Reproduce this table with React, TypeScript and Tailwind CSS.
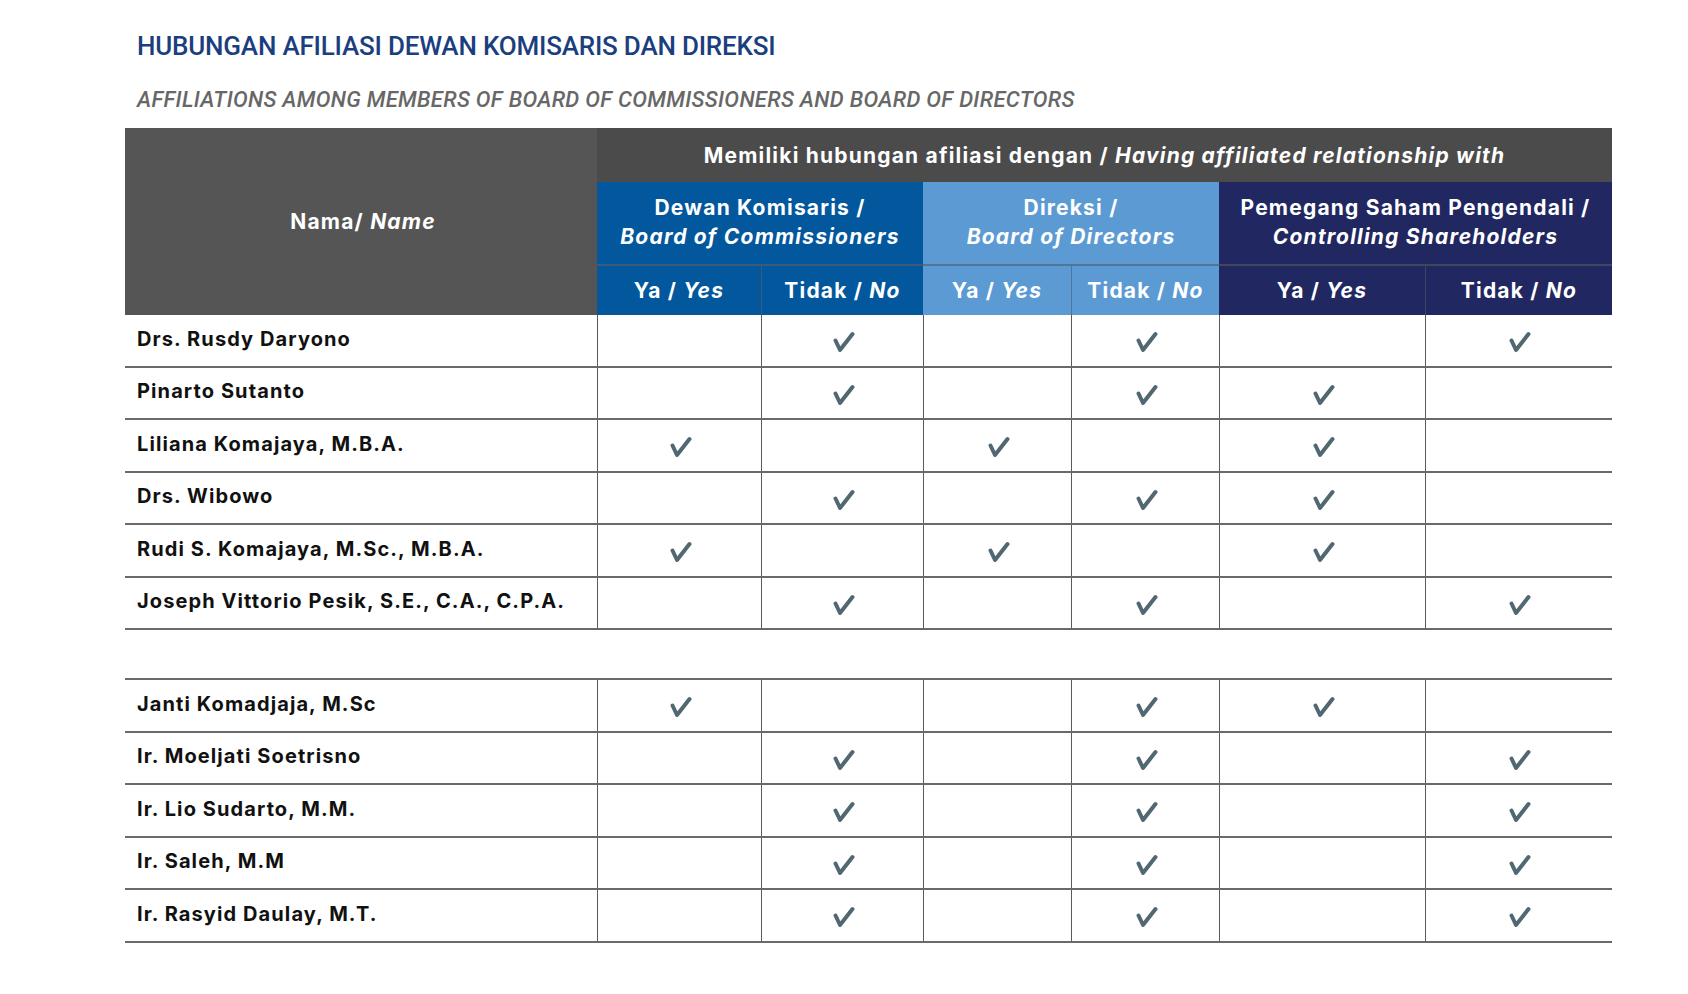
import React from "react";

const cols = "grid-cols-[472px_164px_162px_148px_148px_206px_187px]";

type Row = { name: string; v: [boolean, boolean, boolean] };

const group1: Row[] = [
  { name: "Drs. Rusdy Daryono", v: [false, false, false] },
  { name: "Pinarto Sutanto", v: [false, false, true] },
  { name: "Liliana Komajaya, M.B.A.", v: [true, true, true] },
  { name: "Drs. Wibowo", v: [false, false, true] },
  { name: "Rudi S. Komajaya, M.Sc., M.B.A.", v: [true, true, true] },
  { name: "Joseph Vittorio Pesik, S.E., C.A., C.P.A.", v: [false, false, false] },
];

const group2: Row[] = [
  { name: "Janti Komadjaja, M.Sc", v: [true, false, true] },
  { name: "Ir. Moeljati Soetrisno", v: [false, false, false] },
  { name: "Ir. Lio Sudarto, M.M.", v: [false, false, false] },
  { name: "Ir. Saleh, M.M", v: [false, false, false] },
  { name: "Ir. Rasyid Daulay, M.T.", v: [false, false, false] },
];

function Check() {
  return (
    <svg width="24" height="24" viewBox="0 0 24 24" className="mt-[4px]">
      <path
        d="M4.5 10.5 L9 20 L21.5 4"
        fill="none"
        stroke="#516873"
        strokeWidth="4"
        strokeLinecap="round"
        strokeLinejoin="round"
      />
    </svg>
  );
}

function Cell({ on }: { on: boolean }) {
  return (
    <div className="border-l-[1.5px] border-[#5a5a5a] flex items-center justify-center">
      {on ? <Check /> : null}
    </div>
  );
}

function DataRow({ r }: { r: Row }) {
  const cells: boolean[] = [];
  r.v.forEach((yes) => {
    cells.push(yes, !yes);
  });
  return (
    <div className={`grid ${cols} h-[52.5px] border-b-2 border-[#6a6a6a]`}>
      <div className="flex items-center pl-[12px] pb-[3px] text-[20px] font-bold text-[#111] tracking-[1.1px]">
        {r.name}
      </div>
      {cells.map((c, i) => (
        <Cell key={i} on={c} />
      ))}
    </div>
  );
}

export default function App() {
  return (
    <div
      className="w-[1688px] h-[994px] bg-white"
      style={{ fontFamily: "Inter, 'Noto Sans', sans-serif" }}
    >
      <div className="pl-[137px] pt-[31px]">
        <h1
          className="text-[26px] font-medium text-[#1b3e7e] leading-[30px] tracking-[-0.2px]"
          style={{ fontFamily: "Roboto, sans-serif" }}
        >
          HUBUNGAN AFILIASI DEWAN KOMISARIS DAN DIREKSI
        </h1>
        <h2
          className="mt-[25px] text-[22px] font-medium italic text-[#676767] leading-[28px] tracking-[0.3px]"
          style={{ fontFamily: "Roboto, sans-serif" }}
        >
          AFFILIATIONS AMONG MEMBERS OF BOARD OF COMMISSIONERS AND BOARD OF DIRECTORS
        </h2>
      </div>

      <div className="ml-[125px] mt-[14px] w-[1487px]">
        {/* header */}
        <div className={`grid ${cols} grid-rows-[54px_82px_51px] text-white font-bold text-[21px] tracking-[1.2px]`}>
          <div className="row-span-3 bg-[#555555] flex items-center justify-center pl-[4px]">
            <span>
              Nama/ <i>Name</i>
            </span>
          </div>
          <div className="col-span-6 bg-[#4b4b4b] flex items-center justify-center pt-[2px]">
            <span>
              Memiliki hubungan afiliasi dengan / <i>Having affiliated relationship with</i>
            </span>
          </div>
          <div className="col-span-2 bg-[#02579d] flex flex-col items-center justify-center leading-[29px] pb-[2px]">
            <span>Dewan Komisaris /</span>
            <i>Board of Commissioners</i>
          </div>
          <div className="col-span-2 bg-[#5c9ad3] flex flex-col items-center justify-center leading-[29px] pb-[2px]">
            <span>Direksi /</span>
            <i>Board of Directors</i>
          </div>
          <div className="col-span-2 bg-[#212760] flex flex-col items-center justify-center leading-[29px] pb-[2px]">
            <span>Pemegang Saham Pengendali /</span>
            <i>Controlling Shareholders</i>
          </div>
          <div className="bg-[#02579d] border-t-2 border-[#3d5a7a] flex items-center justify-center">
            <span>
              Ya / <i>Yes</i>
            </span>
          </div>
          <div className="bg-[#02579d] border-t-2 border-l-[1.5px] border-[#3d5a7a] flex items-center justify-center">
            <span>
              Tidak / <i>No</i>
            </span>
          </div>
          <div className="bg-[#5c9ad3] border-t-2 border-[#4f7599] flex items-center justify-center">
            <span>
              Ya / <i>Yes</i>
            </span>
          </div>
          <div className="bg-[#5c9ad3] border-t-2 border-l-[1.5px] border-[#4f7599] flex items-center justify-center">
            <span>
              Tidak / <i>No</i>
            </span>
          </div>
          <div className="bg-[#212760] border-t-2 border-[#41455e] flex items-center justify-center">
            <span>
              Ya / <i>Yes</i>
            </span>
          </div>
          <div className="bg-[#212760] border-t-2 border-l-[1.5px] border-[#41455e] flex items-center justify-center">
            <span>
              Tidak / <i>No</i>
            </span>
          </div>
        </div>

        {group1.map((r) => (
          <DataRow key={r.name} r={r} />
        ))}
        <div className="h-[50px] border-b-2 border-[#6a6a6a]" />
        {group2.map((r) => (
          <DataRow key={r.name} r={r} />
        ))}
      </div>
    </div>
  );
}
